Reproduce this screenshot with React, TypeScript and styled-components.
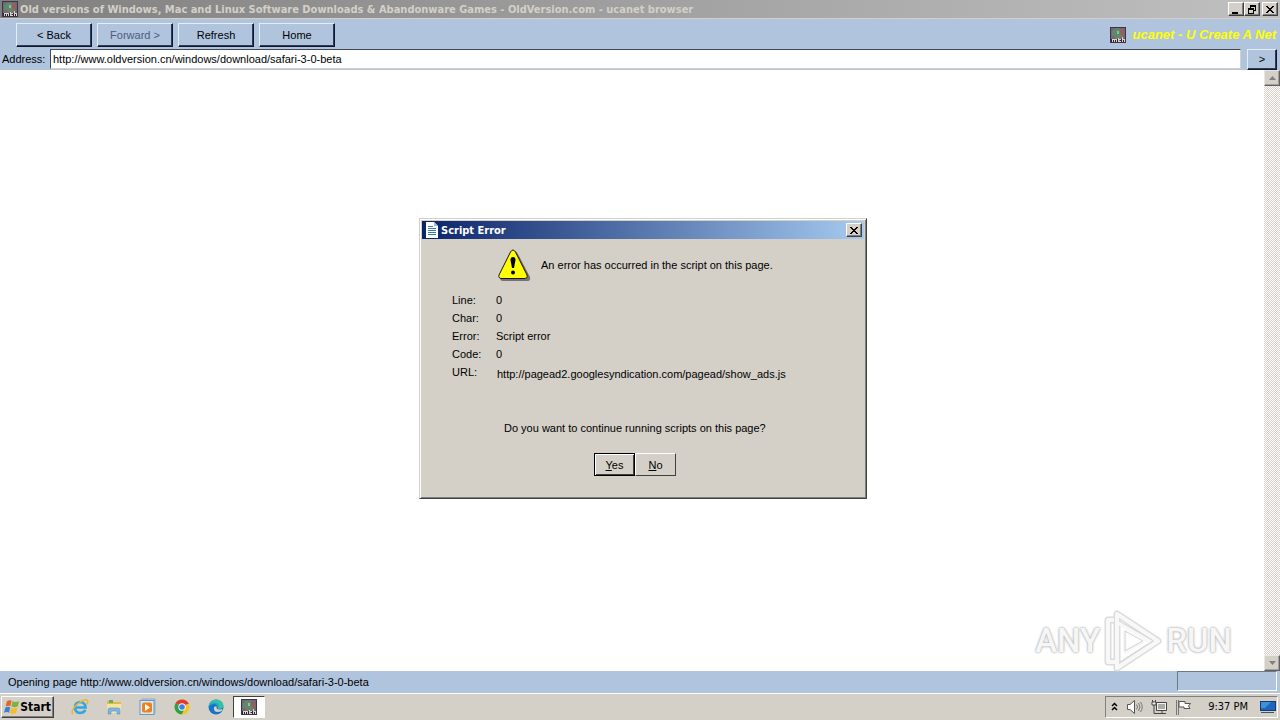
import React from "react";
import styled, { createGlobalStyle, css } from "styled-components";

const Global = createGlobalStyle`
  *, *::before, *::after { box-sizing: border-box; }
  body { margin: 0; background: #fff; }
  button, input { font: inherit; color: inherit; margin: 0; border-radius: 0; }
`;

const ui = css`font-family: "Liberation Sans", Arial, sans-serif;`;
const tahoma = css`font-family: "DejaVu Sans Condensed", "DejaVu Sans", Tahoma, sans-serif;`;

const Screen = styled.div`
  ${ui}
  position: relative;
  min-height: 100vh;
  display: flex;
  flex-direction: column;
  font-size: 11px;
  line-height: 14px;
  color: #000;
`;

const TitleBar = styled.header<{ $active?: boolean }>`
  ${tahoma}
  display: flex;
  align-items: center;
  gap: 2px;
  height: 18px;
  padding: 0 2px;
  font-size: 11px;
  font-weight: bold;
  color: ${(p) => (p.$active ? "#fff" : "#d4d0c8")};
  background: ${(p) =>
    p.$active ? "linear-gradient(90deg, #0a246a, #a6caf0)" : "linear-gradient(90deg, #808080, #c0c0c0)"};
`;

const TitleText = styled.h1`
  flex: 1;
  min-width: 0;
  margin: 0;
  padding-top: 2px;
  font-size: inherit;
  font-weight: inherit;
  white-space: nowrap;
  overflow: hidden;
`;

const CaptionButton = styled.button<{ $gap?: boolean }>`
  display: flex;
  align-items: center;
  justify-content: center;
  width: 16px;
  height: 14px;
  padding: 0;
  margin-left: ${(p) => (p.$gap ? "2px" : "0")};
  color: #000;
  background: #d4d0c8;
  border: 1px solid;
  border-color: #fff #404040 #404040 #fff;
  box-shadow: inset -1px -1px #808080;
`;

const Captions = styled.div`
  display: flex;
`;

const Toolbar = styled.nav`
  display: flex;
  align-items: center;
  gap: 5px;
  height: 30px;
  padding: 2px 4px 0 16px;
  background: #b0c4de;
  border-top: 1px solid #d4d0c8;
`;

const ToolButton = styled.button<{ $small?: boolean }>`
  width: ${(p) => (p.$small ? 30 : 76)}px;
  height: ${(p) => (p.$small ? 21 : 24)}px;
  padding: 0;
  background: #b0c4de;
  border: 1px solid;
  border-color: #e4ecf6 #101830 #101830 #e4ecf6;
  box-shadow: inset -1px -1px #303c58;
  &:disabled { color: #4a5c80; }
`;

const Brand = styled.div`
  display: flex;
  align-items: center;
  gap: 6px;
  margin-left: auto;
  font-size: 13px;
  font-weight: bold;
  font-style: italic;
  color: #ff0;
`;

const AddressBar = styled.form`
  display: flex;
  align-items: center;
  height: 22px;
  padding: 0 3px 0 2px;
  background: #b0c4de;
`;

const AddressLabel = styled.label`
  width: 48px;
`;

const AddressInput = styled.input`
  flex: 1;
  min-width: 0;
  height: 20px;
  padding: 0 2px;
  margin-right: 6px;
  background: #fff;
  border: 1px solid;
  border-color: #404858 #d4d0c8 #d4d0c8 #404858;
  outline: 0;
`;

const Body = styled.main`
  flex: 1;
  display: flex;
  justify-content: flex-end;
  background: #fff;
`;

const ScrollBar = styled.div`
  display: flex;
  flex-direction: column;
  justify-content: space-between;
  width: 16px;
  background: repeating-conic-gradient(#d4d0c8 0 25%, #fff 0 50%) 0 0 / 2px 2px;
`;

const ScrollButton = styled.button`
  display: flex;
  align-items: center;
  justify-content: center;
  width: 16px;
  height: 16px;
  padding: 0;
  background: #d4d0c8;
  border: 1px solid;
  border-color: #e8e6e0 #606060 #606060 #e8e6e0;
  box-shadow: inset -1px -1px #a0a0a0;
`;

const StatusBar = styled.footer`
  display: flex;
  justify-content: space-between;
  height: 22px;
  padding: 0 3px 2px 8px;
  line-height: 22px;
  background: #b0c4de;
`;

const StatusPane = styled.div`
  width: 100px;
  border: 1px solid;
  border-color: #707880 #fff #fff #707880;
`;

const Taskbar = styled.footer`
  ${tahoma}
  display: flex;
  align-items: center;
  height: 27px;
  padding: 0 2px 0 1px;
  background: #d4d0c8;
  border-top: 1px solid #fff;
`;

const StartButton = styled.button`
  display: flex;
  align-items: center;
  gap: 1px;
  width: 53px;
  height: 22px;
  padding: 0 2px;
  margin-right: 9px;
  font-size: 12px;
  font-weight: bold;
  background: #d4d0c8;
  border: 1px solid;
  border-color: #fff #404040 #404040 #fff;
  box-shadow: inset -1px -1px #808080;
`;

const TaskButton = styled.button<{ $pressed?: boolean }>`
  display: flex;
  align-items: center;
  justify-content: center;
  width: ${(p) => (p.$pressed ? 32 : 34)}px;
  height: 22px;
  padding: 0;
  border: 1px solid;
  border-color: ${(p) => (p.$pressed ? "#404040 #fff #fff #404040" : "transparent")};
  background: ${(p) => (p.$pressed ? "#fff" : "transparent")};
`;

const Tray = styled.div`
  display: flex;
  align-items: center;
  height: 22px;
  margin-left: auto;
  padding: 0 1px 0 5px;
  gap: 8px;
  border: 1px solid;
  border-color: #808080 #fff #fff #808080;
`;

const Clock = styled.time`
  padding: 0 4px 0 8px;
  white-space: nowrap;
`;

const Overlay = styled.div`
  position: absolute;
  inset: 0;
  display: flex;
  align-items: center;
  justify-content: center;
  padding: 0 0 3px 6px;
`;

const Dialog = styled.section`
  width: 448px;
  padding: 2px;
  background: #d4d0c8;
  border: 1px solid;
  border-color: #d4d0c8 #404040 #404040 #d4d0c8;
  box-shadow: inset 1px 1px #fff, inset -1px -1px #808080;
`;

const Message = styled.div`
  display: flex;
  align-items: center;
  gap: 10px;
  padding: 9px 0 0 75px;
`;

const Details = styled.div`
  display: grid;
  grid-template-columns: 44px 1fr;
  line-height: 18px;
  padding: 9px 24px 0 30px;
`;

const UrlField = styled.input`
  height: 22px;
  padding: 0 1px;
  border: 0;
  outline: 0;
  background: transparent;
`;

const Question = styled.p`
  margin: 0;
  padding: 36px 0 0 82px;
`;

const Actions = styled.div`
  display: flex;
  padding: 18px 0 20px 172px;
`;

const DialogButton = styled.button<{ $default?: boolean }>`
  width: 41px;
  height: 23px;
  padding: 0;
  background: #d4d0c8;
  border: 1px solid;
  border-color: ${(p) => (p.$default ? "#000" : "#fff #404040 #404040 #fff")};
  box-shadow: ${(p) => (p.$default ? "inset 1px 1px #fff, inset -1px -1px #404040" : "none")};
`;

const Watermark = styled.div`
  position: absolute;
  right: 48px;
  bottom: 48px;
  display: flex;
  align-items: center;
  gap: 4px;
  font-family: Roboto, "Liberation Sans", sans-serif;
  font-size: 33px;
  font-weight: 500;
  line-height: 62px;
  color: #f6f6f6;
  text-shadow: 0 0 2px #aaa, 0 0 3px #bbb;
`;

const Globe = ({ size = 16 }: { size?: number }) => (
  <svg width={size} height={size} viewBox="0 0 16 16" aria-hidden="true">
    <rect width="16" height="16" fill="#3c3448" />
    <rect x="1" y="1" width="14" height="14" fill="#6e6a70" />
    <circle cx="8" cy="7" r="6" fill="#8b6a68" />
    <path d="M2 4l3-2 4 0 2 2-1 2 2 2-2 3-3 1-2-3-3 1z" fill="#5c8a6c" />
    <path d="M10 2l3 3v4l-3-3zM3 8l2 2-2 1z" fill="#a8525a" />
    <path d="M7 4h2v3H7z" fill="#8cc09c" />
    <path d="M1 12h14v3H1z" fill="#28242c" />
    <path d="M2.500 15v-3M2 12.500h4M4.500 12v3M6.500 12v3M8.500 11v4M11 12.500H9v2h2M12.500 10v5M14.500 12v3M12 12.500h3" stroke="#d8d4d8" fill="none" />
  </svg>
);

const Cross = () => (
  <svg width="8" height="7" viewBox="0 0 8 7" shapeRendering="crispEdges">
    <path d="M0 0h2v1H0zM6 0h2v1H6zM1 1h2v1H1zM5 1h2v1H5zM2 2h4v1H2zM3 3h2v1H3zM2 4h4v1H2zM1 5h2v1H1zM5 5h2v1H5zM0 6h2v1H0zM6 6h2v1H6z" />
  </svg>
);

const Minimise = () => (
  <svg width="10" height="9" viewBox="0 0 10 9"><path d="M1 7h6v2H1z" /></svg>
);

const Restore = () => (
  <svg width="10" height="9" viewBox="0 0 10 9" shapeRendering="crispEdges">
    <path d="M3 0h6v6H7V5h1V2H4v1H3zM1 3h6v6H1zM2 5v3h4V5z" fillRule="evenodd" />
  </svg>
);

const Arrow = ({ down }: { down?: boolean }) => (
  <svg width="7" height="4" viewBox="0 0 7 4">
    <path d={down ? "M0 0h7L3.500 4z" : "M0 4h7L3.500 0z"} fill="#808080" />
  </svg>
);

const PageIcon = () => (
  <svg width="15" height="16" viewBox="0 0 15 16" aria-hidden="true">
    <path d="M2 0h8l4 4v12H2z" fill="#fff" />
    <path d="M10 0v4h4z" fill="#9fc0dc" />
    <path d="M4 4.500h5M4 6.500h8M4 8.500h8M4 10.500h8M4 12.500h8" stroke="#3c78b0" />
  </svg>
);

const Warning = () => (
  <svg width="34" height="34" viewBox="0 0 34 34" aria-hidden="true">
    <path d="M16 4q3-2 5 2l12 23q1 4-3 4H6q-3 0-3-3z" fill="#77717a" />
    <path d="M13.500 4q2.500-4 5 0L30 27q1 3.500-3 3.500H5Q1 30.500 2 27z" fill="#ff0" stroke="#15150c" />
    <path d="M13.500 12q0-3 2.500-3t2.500 3L17 20h-2z" fill="#000" />
    <circle cx="16" cy="24.500" r="2" fill="#000" />
  </svg>
);

const WindowsFlag = () => (
  <svg width="16" height="16" viewBox="0 0 16 16" aria-hidden="true">
    <path d="M3 2q3-2 5-.5L6.800 7Q4.500 6 1.800 7.300z" fill="#e8622c" />
    <path d="M9 2q3 1.500 7-.2L14.300 7.500Q11 9 7.800 7.500z" fill="#79b43c" />
    <path d="M1.500 8.500Q4 7 6.500 8.300L5.300 14Q3 12.500 0 14z" fill="#3a7fd0" />
    <path d="M7.500 8.700q3 1.500 6.500 0L12.500 14.300Q9 16 6.200 14.400z" fill="#f6bd28" />
  </svg>
);

const InternetExplorer = () => (
  <svg width="18" height="18" viewBox="0 0 18 18" aria-hidden="true">
    <path d="M14.500 12Q12.500 15 9 15 4 14.500 4 9.500T9 4q5 0 5.500 5.500H5" fill="none" stroke="#35a5e0" strokeWidth="2.600" />
    <path d="M2 16Q-1 13 6 6.500 14 0 16.500 2.500q1 1.500-1 4" fill="none" stroke="#e9b730" strokeWidth="1.400" />
  </svg>
);

const Explorer = () => (
  <svg width="18" height="18" viewBox="0 0 18 18" aria-hidden="true">
    <path d="M2 3h5l1 1h8v11H2z" fill="#e4b84b" />
    <path d="M4 2h4v3H4z" fill="#5faf60" />
    <path d="M2 6h14v9H2z" fill="#fae39a" />
    <path d="M3 16v-4q0-2 2-2h8q2 0 2 2v4h-3v-3H6v3z" fill="#7db9e4" stroke="#4e91c4" strokeWidth=".6" />
  </svg>
);

const MediaPlayer = () => (
  <svg width="18" height="18" viewBox="0 0 18 18" aria-hidden="true">
    <rect x="3" y="1" width="13" height="14" fill="#a9c8e4" stroke="#8db0d0" />
    <rect x="1" y="2.500" width="14" height="14" fill="#d7e8f5" stroke="#6d97bd" />
    <rect x="3" y="4.500" width="10" height="10" rx="2" fill="#f08018" />
    <path d="M6 6l5 3.500-5 3.500z" fill="#fff" />
  </svg>
);

const Chrome = () => (
  <svg width="16" height="16" viewBox="0 0 16 16" aria-hidden="true">
    <circle cx="8" cy="8" r="7.500" fill="#f8c51c" />
    <path d="M8 8L1.500 4.300A7.500 7.500 0 0 1 14.500 4.300z" fill="#e33b2e" />
    <path d="M1.500 4.300A7.500 7.500 0 0 0 7.500 15.500L11 9.500 8 8z" fill="#2da04a" />
    <path d="M8 4.300h6.500L15 5H8z" fill="#e33b2e" />
    <circle cx="8" cy="8" r="3.700" fill="#fff" />
    <circle cx="8" cy="8" r="2.800" fill="#3f7fe8" />
  </svg>
);

const Edge = () => (
  <svg width="16" height="16" viewBox="0 0 16 16" aria-hidden="true">
    <circle cx="8" cy="8" r="7.500" fill="#1673c8" />
    <path d="M.5 8Q1 1 8 .5q7 .5 7.500 6Q15 10 11 10q-2 0-1-2Q9 4.500 5.500 4.500 2 5 .5 8z" fill="#35c2a4" />
    <path d="M.5 8Q2 3 8 3.500q3 1 3 4Q9 4.500 5.500 5 2 5.500.5 8z" fill="#249ddb" />
    <path d="M6 8q-1 5 4 5 3 0 5-2-.5-1-3-.5Q8 11 8.500 7z" fill="#d4d0c8" />
  </svg>
);

const Chevrons = () => (
  <svg width="7" height="11" viewBox="0 0 7 11" aria-hidden="true">
    <path d="M1 4l2.500-2.500L6 4M1 8l2.500-2.500L6 8" fill="none" stroke="#000" strokeWidth="1.500" />
  </svg>
);

const Speaker = () => (
  <svg width="17" height="16" viewBox="0 0 17 16" aria-hidden="true">
    <path d="M1.500 5.500H4L8.500 1.500v13L4 10.500H1.500z" fill="#fff" stroke="#555" />
    <path d="M10.500 5.500q2 2.500 0 5M12.500 4q3 4 0 8M14.500 3q3.500 5 0 10" fill="none" stroke="#777" />
  </svg>
);

const Network = () => (
  <svg width="16" height="16" viewBox="0 0 16 16" aria-hidden="true">
    <path d="M5.500 3.500h10v8h-10zM6 14.500h9M11 12v2" fill="#f4f4f2" stroke="#444" />
    <path d="M7 5h7v5H7z" fill="#aaa" />
    <path d="M1.500 1v3q0 1.500 1.500 1.500T4.500 4V1M3 5v9.500h4" fill="none" stroke="#444" />
    <path d="M1 3h4v3H1z" fill="#f4f4f2" stroke="#444" />
  </svg>
);

const Flag = () => (
  <svg width="17" height="16" viewBox="0 0 17 16" aria-hidden="true">
    <path d="M1.500 1v15M3.500 1v15" stroke="#777" />
    <path d="M4 2.500h6v2h5.500l-2 2.500 1.500 2.500H9v-1.500H4z" fill="#fff" stroke="#555" />
  </svg>
);

const Desktop = () => (
  <svg width="16" height="14" viewBox="0 0 16 14" aria-hidden="true">
    <rect x=".5" y="1.500" width="15" height="9" fill="#1e66bb" stroke="#153b70" />
    <path d="M1 2h10L5 8H1z" fill="#3f90dc" />
    <path d="M1 12h13v1H1z" fill="#43526a" />
  </svg>
);

const PlayMark = () => (
  <svg width="58" height="62" viewBox="0 0 58 62" aria-hidden="true">
    <g fill="none" strokeLinejoin="round">
      <g stroke="#dcdcdc" strokeWidth="7">
        <path d="M13 4v54l41-27z" />
        <path d="M10 10H4v42h7" />
      </g>
      <g stroke="#f8f8f8" strokeWidth="4">
        <path d="M13 4v54l41-27z" />
        <path d="M13 12l34 20M21 20v22l18-11" />
        <path d="M10 10H4v42h7" />
      </g>
      <path d="M21 21v20l18-10zM15 11l33 19M16 52l33-21" stroke="#d4d4d4" />
    </g>
  </svg>
);

const facts = [
  ["Line:", "0"],
  ["Char:", "0"],
  ["Error:", "Script error"],
  ["Code:", "0"],
];

const pinned = [
  { name: "Internet Explorer", Icon: InternetExplorer },
  { name: "Windows Explorer", Icon: Explorer },
  { name: "Media Player", Icon: MediaPlayer },
  { name: "Chrome", Icon: Chrome },
  { name: "Edge", Icon: Edge },
];

export default function App() {
  return (
    <>
      <Global />
      <Screen>
        <TitleBar>
          <Globe />
          <TitleText>
            Old versions of Windows, Mac and Linux Software Downloads &amp; Abandonware Games - OldVersion.com - ucanet browser
          </TitleText>
          <Captions>
            <CaptionButton aria-label="Minimize"><Minimise /></CaptionButton>
            <CaptionButton aria-label="Restore"><Restore /></CaptionButton>
            <CaptionButton aria-label="Close" $gap><Cross /></CaptionButton>
          </Captions>
        </TitleBar>
        <Toolbar>
          <ToolButton>&lt; Back</ToolButton>
          <ToolButton disabled>Forward &gt;</ToolButton>
          <ToolButton>Refresh</ToolButton>
          <ToolButton>Home</ToolButton>
          <Brand><Globe />ucanet - U Create A Net</Brand>
        </Toolbar>
        <AddressBar onSubmit={(e) => e.preventDefault()}>
          <AddressLabel htmlFor="address">Address:</AddressLabel>
          <AddressInput id="address" defaultValue="http://www.oldversion.cn/windows/download/safari-3-0-beta" />
          <ToolButton $small aria-label="Go">&gt;</ToolButton>
        </AddressBar>
        <Body>
          <ScrollBar>
            <ScrollButton aria-label="Scroll up"><Arrow /></ScrollButton>
            <ScrollButton aria-label="Scroll down"><Arrow down /></ScrollButton>
          </ScrollBar>
        </Body>
        <StatusBar>
          Opening page http://www.oldversion.cn/windows/download/safari-3-0-beta
          <StatusPane />
        </StatusBar>
        <Taskbar>
          <StartButton><WindowsFlag />Start</StartButton>
          {pinned.map(({ name, Icon }) => (
            <TaskButton key={name} aria-label={name}><Icon /></TaskButton>
          ))}
          <TaskButton $pressed aria-label="ucanet browser"><Globe /></TaskButton>
          <Tray>
            <Chevrons />
            <Speaker />
            <Network />
            <Flag />
            <Clock>9:37 PM</Clock>
            <Desktop />
          </Tray>
        </Taskbar>
        <Watermark>ANY<PlayMark />RUN</Watermark>
        <Overlay>
          <Dialog role="dialog" aria-label="Script Error">
            <TitleBar as="div" $active>
              <PageIcon />
              <TitleText as="h2">Script Error</TitleText>
              <CaptionButton aria-label="Close dialog"><Cross /></CaptionButton>
            </TitleBar>
            <Message>
              <Warning />
              An error has occurred in the script on this page.
            </Message>
            <Details>
              {facts.map(([name, value]) => (
                <React.Fragment key={name}>
                  <span>{name}</span>
                  <span>{value}</span>
                </React.Fragment>
              ))}
              <label htmlFor="url">URL:</label>
              <UrlField id="url" readOnly value="http://pagead2.googlesyndication.com/pagead/show_ads.js" />
            </Details>
            <Question>Do you want to continue running scripts on this page?</Question>
            <Actions>
              <DialogButton $default><u>Y</u>es</DialogButton>
              <DialogButton><u>N</u>o</DialogButton>
            </Actions>
          </Dialog>
        </Overlay>
      </Screen>
    </>
  );
}
